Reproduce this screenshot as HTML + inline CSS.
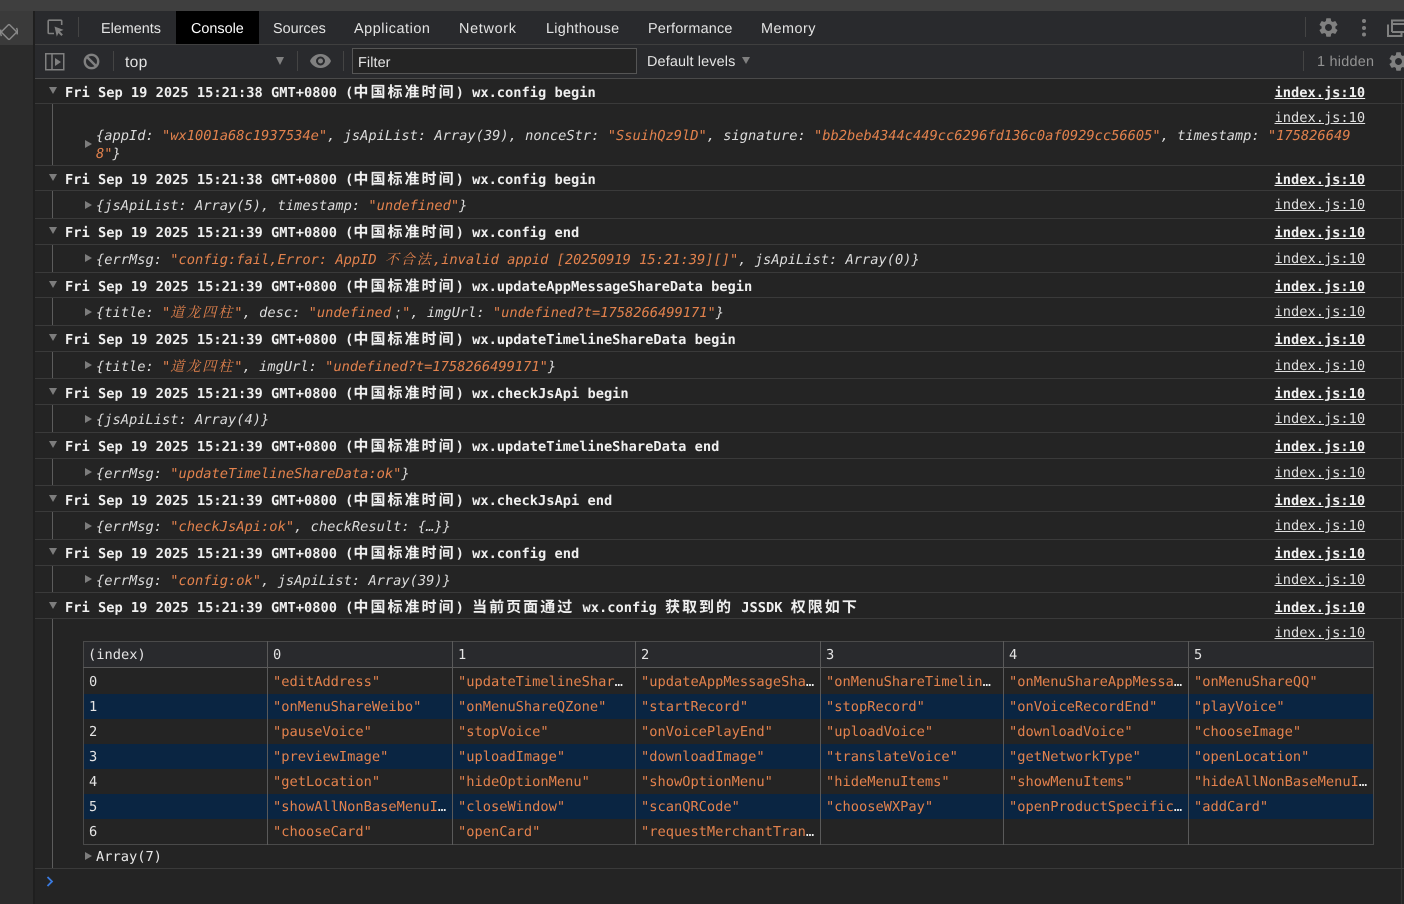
<!DOCTYPE html>
<html><head><meta charset="utf-8"><style>
html,body{margin:0;padding:0;width:1404px;height:904px;overflow:hidden;background:#242424}
body{position:relative;font-family:"DejaVu Sans Mono","Liberation Mono","Noto Sans CJK SC",monospace;font-size:13.7px;color:#dcdcdc;text-rendering:geometricPrecision}
div,span.a{box-sizing:border-box}
.b{position:absolute}
.ui{position:absolute;font-family:"Liberation Sans",sans-serif;font-size:14.4px;line-height:20px;color:#e4e4e4;white-space:nowrap}
.hl{position:absolute;left:35px;right:0;height:1px;background:#3a3a3a}
.vs{position:absolute;width:1px;background:#444}
.g{position:absolute;left:52px;width:1px;background:#5c5c5c}
.l{position:absolute;white-space:nowrap;line-height:18px}
.h{left:65px;font-weight:bold;color:#f0f0f0}
.s{left:96px;font-style:italic;color:#dcdcdc;letter-spacing:.012px}
.src{left:1274.5px;text-decoration:underline;color:#e0e0e0}
.sb{font-weight:bold;color:#f0f0f0}
.o{color:#e3824d}
.c{font-family:"Noto Sans CJK SC",sans-serif;font-size:15px;letter-spacing:2.03px}
.ci{font-family:"Noto Serif CJK SC",serif;font-size:14px;letter-spacing:2px}
.down{position:absolute;left:49px;width:0;height:0;border-left:4.5px solid transparent;border-right:4.5px solid transparent;border-top:7.5px solid #7d7d7d}
.right{position:absolute;left:85px;width:0;height:0;border-top:4.5px solid transparent;border-bottom:4.5px solid transparent;border-left:7px solid #7d7d7d}
table{position:absolute;left:83px;top:641px;width:1290px;border-collapse:collapse;table-layout:fixed;border:1px solid #4a4a4a}
th,td{padding:2px 5px 0;font-weight:normal;text-align:left;white-space:nowrap;overflow:hidden;border-left:1px solid #5a5a5a;height:23px;line-height:23px;color:#e3824d}
th{background:#292a2d;color:#e4e4e4;height:23px;line-height:23px;padding-top:2px;border-bottom:1px solid #5a5a5a}
td:first-child{color:#e4e4e4}
th:first-child,td:first-child{border-left:0}
th:first-child{padding-left:4px}
tr.z td{background:#0a2542}
tr.f td{height:24px}
i{font-style:normal;color:#f0f0f0}
</style></head><body>
<div class="b" style="left:0;top:0;width:1404px;height:11px;background:#3f3f3f"></div>
<div class="b" style="left:0;top:11px;width:33px;height:893px;background:#2b2b2b"></div>
<div class="b" style="left:0;top:11px;width:33px;height:34px;background:#3a3a3a"></div>
<div class="b" style="left:33px;top:11px;width:2px;height:893px;background:#1f1f1f"></div>
<div class="b" style="left:35px;top:11px;width:1369px;height:67px;background:#292a2d"></div>
<div class="b" style="left:35px;top:44px;width:1369px;height:1px;background:#3f3f3f"></div>
<div class="b" style="left:35px;top:78px;width:1369px;height:1px;background:#4a4a4a"></div>
<div class="b" style="left:1401px;top:80px;width:1px;height:824px;background:#333"></div>

<svg class="b" style="left:0;top:23px" width="18" height="18" viewBox="0 0 18 18"><g transform="rotate(-45 9 9)" fill="none" stroke="#8a8a8a" stroke-width="1.4"><rect x="3.500" y="3.500" width="11" height="11" rx="1"/><path d="M.8 6.500A8.500 8.500 0 0 1 5 1.600M17.200 11.500A8.500 8.500 0 0 1 13 16.400"/></g></svg>

<svg class="b" style="left:47px;top:19px" width="18" height="18" viewBox="0 0 18 18"><path d="M7 14.500H2.200a1 1 0 0 1-1-1V2.200a1 1 0 0 1 1-1h11.500a1 1 0 0 1 1 1V6" fill="none" stroke="#808080" stroke-width="1.600"/><path d="M7.500 7.500l9 3.400-3.600 1.600 3 3-1.500 1.500-3-3-1.600 3.600z" fill="#808080"/></svg>
<div class="vs" style="left:78px;top:17px;height:20px"></div>
<div class="b" style="left:176px;top:11px;width:83px;height:33px;background:#000"></div>
<div class="ui" style="left:101px;top:19px">Elements</div>
<div class="ui" style="left:191px;top:19px;color:#fff">Console</div>
<div class="ui" style="left:273px;top:19px">Sources</div>
<div class="ui" style="left:354px;top:19px;letter-spacing:.55px">Application</div>
<div class="ui" style="left:459px;top:19px;letter-spacing:.7px">Network</div>
<div class="ui" style="left:546px;top:19px;letter-spacing:.3px">Lighthouse</div>
<div class="ui" style="left:648px;top:19px;letter-spacing:.2px">Performance</div>
<div class="ui" style="left:761px;top:19px;letter-spacing:.5px">Memory</div>
<div class="vs" style="left:1305px;top:17px;height:20px"></div>
<svg class="b" style="left:1317px;top:16px" width="23" height="23" viewBox="0 0 24 24"><path fill="#808080" d="M19.140 12.940c.04-.3.06-.61.06-.94 0-.32-.02-.64-.07-.94l2.030-1.580a.49.49 0 0 0 .12-.61l-1.920-3.320a.488.488 0 0 0-.59-.22l-2.390.96c-.5-.38-1.030-.7-1.620-.94l-.36-2.540a.484.484 0 0 0-.48-.41h-3.840c-.24 0-.43.17-.47.41l-.36 2.540c-.59.24-1.130.57-1.620.94l-2.390-.96c-.22-.08-.47 0-.59.22L2.740 8.870c-.12.21-.08.47.12.61l2.030 1.580c-.05.3-.09.63-.09.94s.02.64.07.94l-2.030 1.580a.49.49 0 0 0-.12.61l1.920 3.320c.12.22.37.29.59.22l2.390-.96c.5.38 1.030.7 1.620.94l.36 2.540c.05.24.24.41.48.41h3.840c.24 0 .44-.17.47-.41l.36-2.540c.59-.24 1.130-.56 1.620-.94l2.390.96c.22.08.47 0 .59-.22l1.920-3.320c.12-.22.07-.47-.12-.61l-2.010-1.580zM12 15.600c-1.980 0-3.600-1.620-3.600-3.600s1.620-3.600 3.600-3.600 3.600 1.620 3.600 3.600-1.620 3.600-3.600 3.600z"/></svg>
<svg class="b" style="left:1360px;top:18px" width="8" height="20" viewBox="0 0 8 20"><circle cx="4" cy="3" r="2" fill="#808080"/><circle cx="4" cy="10" r="2" fill="#808080"/><circle cx="4" cy="16.500" r="2" fill="#808080"/></svg>
<svg class="b" style="left:1387px;top:19px" width="17" height="18" viewBox="0 0 17 18"><path d="M1 5.500V17h13.500V14" fill="none" stroke="#808080" stroke-width="2"/><path d="M5 13V1.500h12M5 13h12M5 5h12" fill="none" stroke="#808080" stroke-width="2"/></svg>

<svg class="b" style="left:45px;top:53px" width="20" height="18" viewBox="0 0 20 18"><rect x=".75" y=".75" width="18" height="16" fill="none" stroke="#808080" stroke-width="1.500"/><path d="M7 1v16" stroke="#808080" stroke-width="1.500"/><path d="M10 5v8l6-4z" fill="#808080"/></svg>
<svg class="b" style="left:83px;top:53px" width="17" height="17" viewBox="0 0 17 17"><circle cx="8.500" cy="8.500" r="6.700" fill="none" stroke="#808080" stroke-width="2.400"/><path d="M4 4l9 9" stroke="#808080" stroke-width="2.400"/></svg>
<div class="vs" style="left:113px;top:51px;height:20px"></div>
<div class="ui" style="left:125px;top:53px;font-size:15.600px;letter-spacing:.3px">top</div>
<div class="b" style="left:276px;top:57px;width:0;height:0;border-left:4.500px solid transparent;border-right:4.500px solid transparent;border-top:8px solid #808080"></div>
<div class="vs" style="left:297px;top:51px;height:20px"></div>
<svg class="b" style="left:310px;top:54px" width="21" height="14" viewBox="0 0 21 14"><path fill="#808080" d="M10.500 0C5.700 0 1.700 2.900 0 7c1.700 4.100 5.700 7 10.500 7s8.800-2.900 10.500-7C19.300 2.900 15.300 0 10.500 0zm0 11.500a4.500 4.500 0 1 1 0-9 4.500 4.500 0 0 1 0 9zm0-7a2.500 2.500 0 1 0 0 5 2.500 2.500 0 0 0 0-5z"/></svg>
<div class="vs" style="left:343px;top:51px;height:20px"></div>
<div class="b" style="left:352px;top:48px;width:285px;height:26px;border:1px solid #555;background:#242424"></div>
<div class="ui" style="left:358px;top:53px;letter-spacing:.1px">Filter</div>
<div class="ui" style="left:647px;top:52px;letter-spacing:.15px">Default levels</div>
<div class="b" style="left:742px;top:57px;width:0;height:0;border-left:4px solid transparent;border-right:4px solid transparent;border-top:7px solid #808080"></div>
<div class="vs" style="left:1303px;top:51px;height:20px"></div>
<div class="ui" style="left:1317px;top:52px;color:#939393;letter-spacing:.25px">1 hidden</div>
<svg class="b" style="left:1387px;top:50px" width="23" height="23" viewBox="0 0 24 24"><path fill="#808080" d="M19.140 12.940c.04-.3.06-.61.06-.94 0-.32-.02-.64-.07-.94l2.030-1.580a.49.49 0 0 0 .12-.61l-1.920-3.320a.488.488 0 0 0-.59-.22l-2.390.96c-.5-.38-1.030-.7-1.620-.94l-.36-2.540a.484.484 0 0 0-.48-.41h-3.840c-.24 0-.43.17-.47.41l-.36 2.540c-.59.24-1.130.57-1.620.94l-2.390-.96c-.22-.08-.47 0-.59.22L2.740 8.870c-.12.21-.08.47.12.61l2.030 1.580c-.05.3-.09.63-.09.94s.02.64.07.94l-2.030 1.580a.49.49 0 0 0-.12.61l1.920 3.320c.12.22.37.29.59.22l2.390-.96c.5.38 1.030.7 1.620.94l.36 2.540c.05.24.24.41.48.41h3.840c.24 0 .44-.17.47-.41l.36-2.540c.59-.24 1.130-.56 1.620-.94l2.390.96c.22.08.47 0 .59-.22l1.920-3.320c.12-.22.07-.47-.12-.61l-2.010-1.580zM12 15.600c-1.980 0-3.600-1.620-3.600-3.600s1.620-3.600 3.600-3.600 3.600 1.620 3.600 3.600-1.620 3.600-3.600 3.600z"/></svg>

<div class="hl" style="top:103px"></div><div class="hl" style="top:165px"></div><div class="hl" style="top:190px"></div><div class="hl" style="top:218px"></div><div class="hl" style="top:244px"></div><div class="hl" style="top:272px"></div><div class="hl" style="top:297px"></div><div class="hl" style="top:325px"></div><div class="hl" style="top:351px"></div><div class="hl" style="top:378px"></div><div class="hl" style="top:404px"></div><div class="hl" style="top:432px"></div><div class="hl" style="top:458px"></div><div class="hl" style="top:485px"></div><div class="hl" style="top:511px"></div><div class="hl" style="top:539px"></div><div class="hl" style="top:565px"></div><div class="hl" style="top:592px"></div><div class="hl" style="top:618px"></div><div class="hl" style="top:868px"></div>

<div class="g" style="top:104px;height:61px"></div><div class="g" style="top:191px;height:27px"></div><div class="g" style="top:245px;height:27px"></div><div class="g" style="top:298px;height:27px"></div><div class="g" style="top:352px;height:26px"></div><div class="g" style="top:405px;height:27px"></div><div class="g" style="top:459px;height:26px"></div><div class="g" style="top:512px;height:27px"></div><div class="g" style="top:566px;height:26px"></div><div class="g" style="top:619px;height:249px"></div>

<div class="down" style="top:87px"></div><div class="down" style="top:174px"></div><div class="down" style="top:227px"></div><div class="down" style="top:281px"></div><div class="down" style="top:334px"></div><div class="down" style="top:388px"></div><div class="down" style="top:441px"></div><div class="down" style="top:495px"></div><div class="down" style="top:548px"></div><div class="down" style="top:602px"></div>
<div class="right" style="top:140px"></div><div class="right" style="top:201px"></div><div class="right" style="top:254px"></div><div class="right" style="top:308px"></div><div class="right" style="top:361px"></div><div class="right" style="top:415px"></div><div class="right" style="top:468px"></div><div class="right" style="top:522px"></div><div class="right" style="top:575px"></div><div class="right" style="top:852px"></div>

<div class="l h" style="top:83px">Fri Sep 19 2025 15:21:38 GMT+0800 (<span class="c">中国标准时间</span>) wx.config begin</div>
<div class="l src sb" style="top:84px">index.js:10</div>
<div class="l src" style="top:109px">index.js:10</div>
<div class="l s" style="top:127px">{appId: <span class="o">"wx1001a68c1937534e"</span>, jsApiList: Array(39), nonceStr: <span class="o">"SsuihQz9lD"</span>, signature: <span class="o">"bb2beb4344c449cc6296fd136c0af0929cc56605"</span>, timestamp: <span class="o">"175826649</span></div>
<div class="l s" style="top:145px"><span class="o">8"</span>}</div>

<div class="l h" style="top:170px">Fri Sep 19 2025 15:21:38 GMT+0800 (<span class="c">中国标准时间</span>) wx.config begin</div>
<div class="l src sb" style="top:171px">index.js:10</div>
<div class="l s" style="top:197px">{jsApiList: Array(5), timestamp: <span class="o">"undefined"</span>}</div>
<div class="l src" style="top:196px">index.js:10</div>

<div class="l h" style="top:223px">Fri Sep 19 2025 15:21:39 GMT+0800 (<span class="c">中国标准时间</span>) wx.config end</div>
<div class="l src sb" style="top:224px">index.js:10</div>
<div class="l s" style="top:250px">{errMsg: <span class="o">"config:fail,Error: AppID <span class="ci">不合法</span>,invalid appid [20250919 15:21:39][]"</span>, jsApiList: Array(0)}</div>
<div class="l src" style="top:250px">index.js:10</div>

<div class="l h" style="top:277px">Fri Sep 19 2025 15:21:39 GMT+0800 (<span class="c">中国标准时间</span>) wx.updateAppMessageShareData begin</div>
<div class="l src sb" style="top:278px">index.js:10</div>
<div class="l s" style="top:303px">{title: <span class="o">"<span class="ci">道龙四柱</span>"</span>, desc: <span class="o">"undefined<span style="display:inline-block;width:11px;color:#d6d6d6;text-align:center">⁏</span>"</span>, imgUrl: <span class="o">"undefined?t=1758266499171"</span>}</div>
<div class="l src" style="top:303px">index.js:10</div>

<div class="l h" style="top:330px">Fri Sep 19 2025 15:21:39 GMT+0800 (<span class="c">中国标准时间</span>) wx.updateTimelineShareData begin</div>
<div class="l src sb" style="top:331px">index.js:10</div>
<div class="l s" style="top:357px">{title: <span class="o">"<span class="ci">道龙四柱</span>"</span>, imgUrl: <span class="o">"undefined?t=1758266499171"</span>}</div>
<div class="l src" style="top:357px">index.js:10</div>

<div class="l h" style="top:384px">Fri Sep 19 2025 15:21:39 GMT+0800 (<span class="c">中国标准时间</span>) wx.checkJsApi begin</div>
<div class="l src sb" style="top:385px">index.js:10</div>
<div class="l s" style="top:411px">{jsApiList: Array(4)}</div>
<div class="l src" style="top:410px">index.js:10</div>

<div class="l h" style="top:437px">Fri Sep 19 2025 15:21:39 GMT+0800 (<span class="c">中国标准时间</span>) wx.updateTimelineShareData end</div>
<div class="l src sb" style="top:438px">index.js:10</div>
<div class="l s" style="top:465px">{errMsg: <span class="o">"updateTimelineShareData:ok"</span>}</div>
<div class="l src" style="top:464px">index.js:10</div>

<div class="l h" style="top:491px">Fri Sep 19 2025 15:21:39 GMT+0800 (<span class="c">中国标准时间</span>) wx.checkJsApi end</div>
<div class="l src sb" style="top:492px">index.js:10</div>
<div class="l s" style="top:518px">{errMsg: <span class="o">"checkJsApi:ok"</span>, checkResult: {…}}</div>
<div class="l src" style="top:517px">index.js:10</div>

<div class="l h" style="top:544px">Fri Sep 19 2025 15:21:39 GMT+0800 (<span class="c">中国标准时间</span>) wx.config end</div>
<div class="l src sb" style="top:545px">index.js:10</div>
<div class="l s" style="top:572px">{errMsg: <span class="o">"config:ok"</span>, jsApiList: Array(39)}</div>
<div class="l src" style="top:571px">index.js:10</div>

<div class="l h" style="top:598px">Fri Sep 19 2025 15:21:39 GMT+0800 (<span class="c">中国标准时间</span>) <span class="c">当前页面通过</span> wx.config <span class="c">获取到的</span> JSSDK <span class="c">权限如下</span></div>
<div class="l src sb" style="top:599px">index.js:10</div>
<div class="l src" style="top:624px">index.js:10</div>

<table>
<colgroup><col style="width:184px"><col style="width:185px"><col style="width:183px"><col style="width:185px"><col style="width:183px"><col style="width:185px"><col style="width:185px"></colgroup>
<tr><th>(index)</th><th>0</th><th>1</th><th>2</th><th>3</th><th>4</th><th>5</th></tr>
<tr class="f"><td>0</td><td>"editAddress"</td><td>"updateTimelineShar<i>…</i></td><td>"updateAppMessageSha<i>…</i></td><td>"onMenuShareTimelin<i>…</i></td><td>"onMenuShareAppMessa<i>…</i></td><td>"onMenuShareQQ"</td></tr>
<tr class="z"><td>1</td><td>"onMenuShareWeibo"</td><td>"onMenuShareQZone"</td><td>"startRecord"</td><td>"stopRecord"</td><td>"onVoiceRecordEnd"</td><td>"playVoice"</td></tr>
<tr><td>2</td><td>"pauseVoice"</td><td>"stopVoice"</td><td>"onVoicePlayEnd"</td><td>"uploadVoice"</td><td>"downloadVoice"</td><td>"chooseImage"</td></tr>
<tr class="z"><td>3</td><td>"previewImage"</td><td>"uploadImage"</td><td>"downloadImage"</td><td>"translateVoice"</td><td>"getNetworkType"</td><td>"openLocation"</td></tr>
<tr><td>4</td><td>"getLocation"</td><td>"hideOptionMenu"</td><td>"showOptionMenu"</td><td>"hideMenuItems"</td><td>"showMenuItems"</td><td>"hideAllNonBaseMenuI<i>…</i></td></tr>
<tr class="z"><td>5</td><td>"showAllNonBaseMenuI<i>…</i></td><td>"closeWindow"</td><td>"scanQRCode"</td><td>"chooseWXPay"</td><td>"openProductSpecific<i>…</i></td><td>"addCard"</td></tr>
<tr><td>6</td><td>"chooseCard"</td><td>"openCard"</td><td>"requestMerchantTran<i>…</i></td><td></td><td></td><td></td></tr>
</table>
<div class="l" style="left:96px;top:848px;color:#e8e8e8">Array(7)</div>
<svg class="b" style="left:46px;top:876px" width="8" height="11" viewBox="0 0 8 11"><path d="M1.500 1l4.500 4.500L1.500 10" fill="none" stroke="#3a7be0" stroke-width="1.800"/></svg>
</body></html>
